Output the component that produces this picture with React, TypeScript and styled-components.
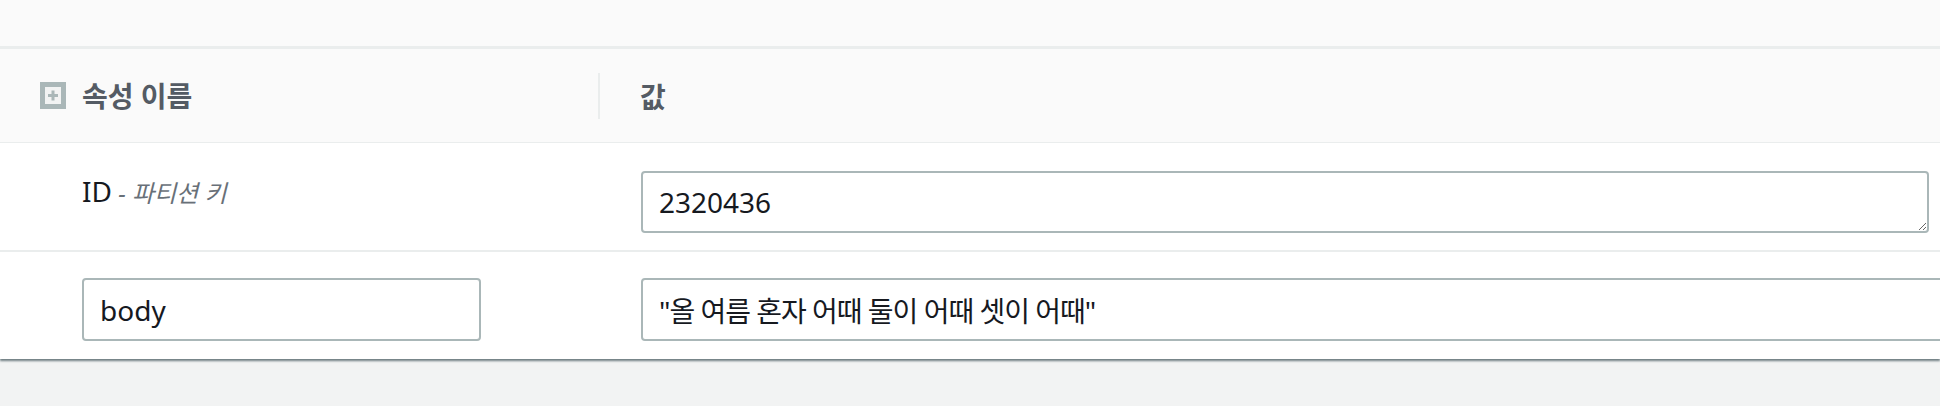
import React from 'react'
import styled, { createGlobalStyle } from 'styled-components'

const GlobalStyle = createGlobalStyle`
  html, body {
    margin: 0;
    padding: 0;
    background: #f2f3f3;
  }
  body {
    font-family: 'Noto Sans', 'Noto Sans CJK KR', sans-serif;
    color: #16191f;
  }
  * {
    box-sizing: border-box;
  }
`

type Attribute = {
  name: string
  value: string
  note?: string
  editableName?: boolean
  multiline?: boolean
}

const ATTRIBUTES: Attribute[] = [
  { name: 'ID', note: '파티션 키', value: '2320436', multiline: true },
  { name: 'body', value: '"올 여름 혼자 어때 둘이 어때 셋이 어때"', editableName: true },
]

function ExpandIcon(): JSX.Element {
  return (
    <svg width="26" height="27" viewBox="0 0 26 27" aria-hidden>
      <rect x="0" y="0" width="26" height="27" fill="#aab7b8" />
      <rect x="5" y="5" width="16" height="17" fill="#f2f3f3" />
      <rect x="8" y="12" width="10" height="3" fill="#aab7b8" />
      <rect x="11.5" y="8.5" width="3" height="10" fill="#aab7b8" />
    </svg>
  )
}

export default function App(): JSX.Element {
  return (
    <>
      <GlobalStyle />
      <PageSCP>
        <PanelSCP>
          <TopStripSCP />

          <HeaderRowSCP>
            <NameHeaderSCP>
              <ExpandIcon />
              <span>속성 이름</span>
            </NameHeaderSCP>
            <ValueHeaderSCP>값</ValueHeaderSCP>
          </HeaderRowSCP>

          {ATTRIBUTES.map((attr) => (
            <AttributeRowSCP key={attr.name}>
              <NameCellSCP>
                {attr.editableName ? (
                  <TextInputSCP defaultValue={attr.name} $width="399px" />
                ) : (
                  <NameLabelSCP>
                    {attr.name}
                    {attr.note && <NoteSCP> - {attr.note}</NoteSCP>}
                  </NameLabelSCP>
                )}
              </NameCellSCP>
              <ValueCellSCP>
                {attr.multiline ? (
                  <TextAreaSCP rows={1} defaultValue={attr.value} />
                ) : (
                  <TextInputSCP
                    defaultValue={attr.value}
                    $width="calc(100% + 60px)"
                    $tight
                  />
                )}
              </ValueCellSCP>
            </AttributeRowSCP>
          ))}
        </PanelSCP>
      </PageSCP>
    </>
  )
}

const PageSCP = styled.div`
  width: 1940px;
  height: 406px;
  background: #f2f3f3;
  overflow: hidden;
`

const PanelSCP = styled.div`
  background: #ffffff;
  box-shadow: 0 2px 2px 0 rgba(0, 28, 36, 0.55);
  overflow: hidden;
`

const TopStripSCP = styled.div`
  height: 49px;
  background: #fafafa;
  border-bottom: 3px solid #eaeded;
`

const HeaderRowSCP = styled.div`
  display: grid;
  grid-template-columns: 598px 1fr;
  align-items: center;
  height: 94px;
  background: #fafafa;
  border-bottom: 1px solid #eaeded;
  font-size: 28px;
  font-weight: 700;
  color: #545b64;
`

const NameHeaderSCP = styled.div`
  display: flex;
  align-items: center;
  gap: 16px;
  padding-left: 40px;
  line-height: 40px;
`

const ValueHeaderSCP = styled.div`
  display: flex;
  align-items: center;
  height: 46px;
  padding-left: 40px;
  border-left: 2px solid #eaeded;
`

const AttributeRowSCP = styled.div`
  display: grid;
  grid-template-columns: 598px 1fr;
  align-items: start;
  padding: 28px 0 17px;
  border-bottom: 2px solid #eaeded;

  &:last-child {
    border-bottom: none;
    padding: 26px 0 18px;
  }
`

const NameCellSCP = styled.div`
  padding-left: 82px;
`

const NameLabelSCP = styled.div`
  font-size: 28px;
  line-height: 40px;
  color: #16191f;
`

const NoteSCP = styled.span`
  font-size: 24px;
  font-style: italic;
  color: #687078;
`

const ValueCellSCP = styled.div`
  padding: 0 11px 0 43px;
`

const fieldBase = `
  display: block;
  height: 63px;
  padding: 9px 16px;
  border: 2px solid #aab7b8;
  border-radius: 4px;
  background: #ffffff;
  font-family: 'Noto Sans', 'Noto Sans CJK KR', sans-serif;
  font-size: 28px;
  line-height: 41px;
  color: #16191f;
  outline: none;
`

const TextInputSCP = styled.input<{ $width: string; $tight?: boolean }>`
  ${fieldBase}
  width: ${(p) => p.$width};
  letter-spacing: ${(p) => (p.$tight ? '-1px' : 'normal')};
`

const TextAreaSCP = styled.textarea`
  ${fieldBase}
  width: 100%;
  height: 62px;
  resize: vertical;
  overflow: hidden;
`
